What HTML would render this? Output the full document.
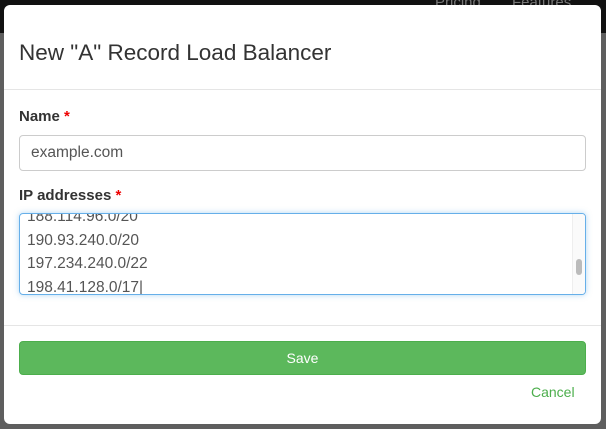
<!DOCTYPE html>
<html><head><style>
*{box-sizing:border-box;margin:0;padding:0}
body{width:606px;height:429px;overflow:hidden;background:#5e5e5e;font-family:"Liberation Sans",Arial,sans-serif;position:relative}
.top{position:absolute;left:0;top:0;width:606px;height:33px;background:#111}
.nav{position:absolute;top:-6px;color:#777;font-size:15px}
.modal{position:absolute;left:4px;top:5px;width:597px;height:419px;background:#fff;border-radius:6px;overflow:hidden}
h1{position:absolute;left:15px;top:35px;font-size:22.5px;font-weight:normal;color:#333}
.hl{position:absolute;left:0;width:100%;height:1px;background:#e5e5e5}
label{position:absolute;left:15px;font-size:15px;font-weight:bold;color:#333}
label span{color:#e00}
.inp{position:absolute;left:15px;width:567px;border:1px solid #ccc;border-radius:4px;font-size:15.5px;color:#555;padding-left:11px}
.ta{border-color:#66afe9;box-shadow:0 0 6px rgba(102,175,233,.5);overflow:hidden;line-height:23.5px;padding-left:7px}
.btn{position:absolute;left:15px;top:336px;width:567px;height:34px;background:#5cb85c;border:1px solid #4cae4c;border-radius:4px;color:#fff;font-size:14px;text-align:center;line-height:32px}
.cancel{position:absolute;left:527px;top:379px;color:#4cae4c;font-size:14px}
</style></head><body>
<div class="top"><span class="nav" style="left:435px">Pricing</span><span class="nav" style="left:512px">Features</span></div>
<div class="modal">
<h1>New "A" Record Load Balancer</h1>
<div class="hl" style="top:84px"></div>
<label style="top:103px">Name <span>*</span></label>
<div class="inp" style="top:130px;height:36px;line-height:34px">example.com</div>
<label style="top:182px">IP addresses <span>*</span></label>
<div class="inp ta" style="top:208px;height:82px">
<div style="margin-top:-9px">188.114.96.0/20<br>190.93.240.0/20<br>197.234.240.0/22<br>198.41.128.0/17|</div>
<div style="position:absolute;right:0;top:0;width:13px;height:80px;border-left:1px solid #eee;background:#fafafa"><div style="position:absolute;left:3px;top:45px;width:6px;height:16px;border-radius:3px;background:#bbb"></div></div>
</div>
<div class="hl" style="top:320px"></div>
<div class="btn">Save</div>
<div class="cancel">Cancel</div>
</div>
</body></html>
